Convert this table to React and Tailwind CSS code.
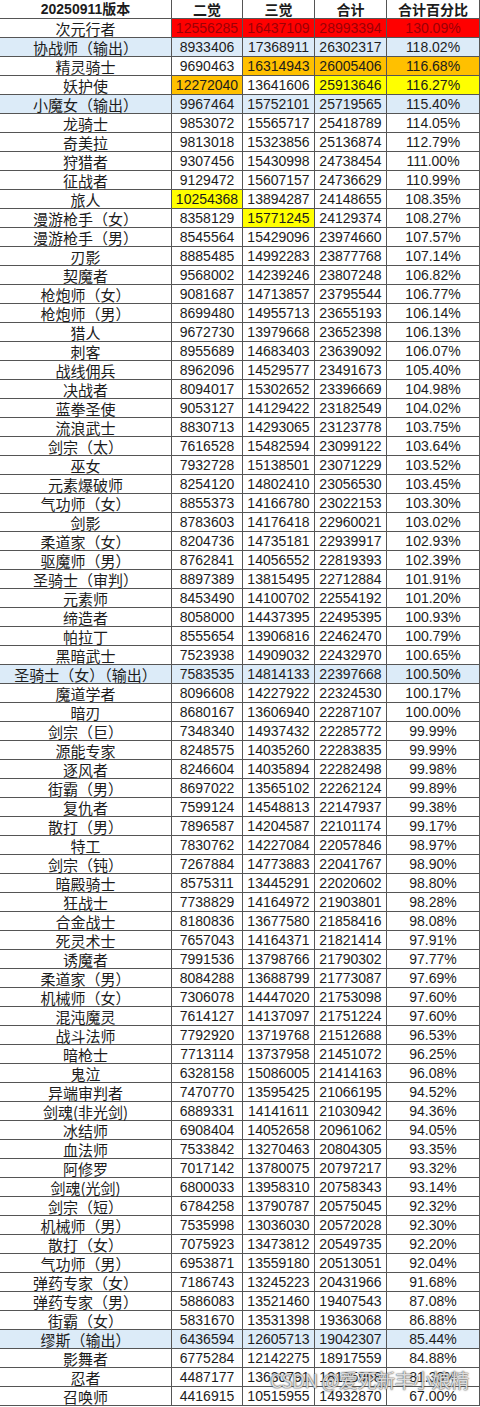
import React from "react";

// name, 二觉, 三觉, 合计, 百分比, fills for the 4 number cells, blue row flag
const rows = [
  ["次元行者", "12556285", "16437109", "28993394", "130.09%", ["r", "r", "r", "r"]],
  ["协战师（输出）", "8933406", "17368911", "26302317", "118.02%", null, true],
  ["精灵骑士", "9690463", "16314943", "26005406", "116.68%", ["", "o", "o", "o"]],
  ["妖护使", "12272040", "13641606", "25913646", "116.27%", ["o", "", "y", "y"]],
  ["小魔女（输出）", "9967464", "15752101", "25719565", "115.40%", null, true],
  ["龙骑士", "9853072", "15565717", "25418789", "114.05%"],
  ["奇美拉", "9813018", "15323856", "25136874", "112.79%"],
  ["狩猎者", "9307456", "15430998", "24738454", "111.00%"],
  ["征战者", "9129472", "15607157", "24736629", "110.99%"],
  ["旅人", "10254368", "13894287", "24148655", "108.35%", ["y", "", "", ""]],
  ["漫游枪手（女）", "8358129", "15771245", "24129374", "108.27%", ["", "y", "", ""]],
  ["漫游枪手（男）", "8545564", "15429096", "23974660", "107.57%"],
  ["刃影", "8885485", "14992283", "23877768", "107.14%"],
  ["契魔者", "9568002", "14239246", "23807248", "106.82%"],
  ["枪炮师（女）", "9081687", "14713857", "23795544", "106.77%"],
  ["枪炮师（男）", "8699480", "14955713", "23655193", "106.14%"],
  ["猎人", "9672730", "13979668", "23652398", "106.13%"],
  ["刺客", "8955689", "14683403", "23639092", "106.07%"],
  ["战线佣兵", "8962096", "14529577", "23491673", "105.40%"],
  ["决战者", "8094017", "15302652", "23396669", "104.98%"],
  ["蓝拳圣使", "9053127", "14129422", "23182549", "104.02%"],
  ["流浪武士", "8830713", "14293065", "23123778", "103.75%"],
  ["剑宗（太）", "7616528", "15482594", "23099122", "103.64%"],
  ["巫女", "7932728", "15138501", "23071229", "103.52%"],
  ["元素爆破师", "8254120", "14802410", "23056530", "103.45%"],
  ["气功师（女）", "8855373", "14166780", "23022153", "103.30%"],
  ["剑影", "8783603", "14176418", "22960021", "103.02%"],
  ["柔道家（女）", "8204736", "14735181", "22939917", "102.93%"],
  ["驱魔师（男）", "8762841", "14056552", "22819393", "102.39%"],
  ["圣骑士（审判）", "8897389", "13815495", "22712884", "101.91%"],
  ["元素师", "8453490", "14100702", "22554192", "101.20%"],
  ["缔造者", "8058000", "14437395", "22495395", "100.93%"],
  ["帕拉丁", "8555654", "13906816", "22462470", "100.79%"],
  ["黑暗武士", "7523938", "14909032", "22432970", "100.65%"],
  ["圣骑士（女）（输出）", "7583535", "14814133", "22397668", "100.50%", null, true],
  ["魔道学者", "8096608", "14227922", "22324530", "100.17%"],
  ["暗刃", "8680167", "13606940", "22287107", "100.00%"],
  ["剑宗（巨）", "7348340", "14937432", "22285772", "99.99%"],
  ["源能专家", "8248575", "14035260", "22283835", "99.99%"],
  ["逐风者", "8246604", "14035894", "22282498", "99.98%"],
  ["街霸（男）", "8697022", "13565102", "22262124", "99.89%"],
  ["复仇者", "7599124", "14548813", "22147937", "99.38%"],
  ["散打（男）", "7896587", "14204587", "22101174", "99.17%"],
  ["特工", "7830762", "14227084", "22057846", "98.97%"],
  ["剑宗（钝）", "7267884", "14773883", "22041767", "98.90%"],
  ["暗殿骑士", "8575311", "13445291", "22020602", "98.80%"],
  ["狂战士", "7738829", "14164972", "21903801", "98.28%"],
  ["合金战士", "8180836", "13677580", "21858416", "98.08%"],
  ["死灵术士", "7657043", "14164371", "21821414", "97.91%"],
  ["诱魔者", "7991536", "13798766", "21790302", "97.77%"],
  ["柔道家（男）", "8084288", "13688799", "21773087", "97.69%"],
  ["机械师（女）", "7306078", "14447020", "21753098", "97.60%"],
  ["混沌魔灵", "7614127", "14137097", "21751224", "97.60%"],
  ["战斗法师", "7792920", "13719768", "21512688", "96.53%"],
  ["暗枪士", "7713114", "13737958", "21451072", "96.25%"],
  ["鬼泣", "6328158", "15086005", "21414163", "96.08%"],
  ["异端审判者", "7470770", "13595425", "21066195", "94.52%"],
  ["剑魂(非光剑)", "6889331", "14141611", "21030942", "94.36%"],
  ["冰结师", "6908404", "14052658", "20961062", "94.05%"],
  ["血法师", "7533842", "13270463", "20804305", "93.35%"],
  ["阿修罗", "7017142", "13780075", "20797217", "93.32%"],
  ["剑魂(光剑)", "6800033", "13958310", "20758343", "93.14%"],
  ["剑宗（短）", "6784258", "13790787", "20575045", "92.32%"],
  ["机械师（男）", "7535998", "13036030", "20572028", "92.30%"],
  ["散打（女）", "7075923", "13473812", "20549735", "92.20%"],
  ["气功师（男）", "6953871", "13559180", "20513051", "92.04%"],
  ["弹药专家（女）", "7186743", "13245223", "20431966", "91.68%"],
  ["弹药专家（男）", "5886083", "13521460", "19407543", "87.08%"],
  ["街霸（女）", "5831670", "13531398", "19363068", "86.88%"],
  ["缪斯（输出）", "6436594", "12605713", "19042307", "85.44%", null, true],
  ["影舞者", "6775284", "12142275", "18917559", "84.88%"],
  ["忍者", "4487177", "13630791", "18125968", "81.33%"],
  ["召唤师", "4416915", "10515955", "14932870", "67.00%"],
];

const fills = {
  r: "bg-[#ff0000] text-[#9c0006]",
  o: "bg-[#ffc000]",
  y: "bg-[#ffff00]",
};

const cell =
  "h-[19px] leading-[17px] flex items-center justify-center border-r border-b border-[#555] whitespace-nowrap";
const cjk = "font-['Noto_Sans_CJK_SC','Noto_Sans',sans-serif]";
const num = "font-['Liberation_Sans','Noto_Sans_CJK_SC',sans-serif] text-[14px]";

const App = () => {
  return (
    <div className="relative w-[480px] bg-white text-[#1c1c1c]">
      <div className="grid grid-cols-[172px_71px_72px_72px_93px]">
        {/* header */}
        <div className={cell + " " + num + " font-bold"}>20250911版本</div>
        <div className={cell + " " + cjk + " text-[14px] font-bold"}>二觉</div>
        <div className={cell + " " + cjk + " text-[14px] font-bold"}>三觉</div>
        <div className={cell + " " + cjk + " text-[14px] font-bold"}>合计</div>
        <div className={cell + " " + cjk + " text-[14px] font-bold"}>合计百分比</div>

        {rows.map((row, i) => {
          const [name, a, b, c, pct, f, blue] = row;
          const bg = blue ? "bg-[#dcebf8]" : "";
          const vals = [a, b, c, pct];
          return (
            <React.Fragment key={i}>
              <div className={cell + " " + cjk + " text-[15px] " + bg}>{name}</div>
              {vals.map((v, j) => (
                <div key={j} className={cell + " " + num + " " + (f && f[j] ? fills[f[j]] : bg)}>
                  {v}
                </div>
              ))}
            </React.Fragment>
          );
        })}
      </div>

      {/* watermark */}
      <div className="absolute left-[270px] top-[1368px] font-['Noto_Sans_CJK_SC',sans-serif] text-[19px] leading-[24px] text-white/80 tracking-tight [text-shadow:0_0_2px_#555,0_0_1px_#333]">
        CSDN @爱死新丰小娘精
      </div>
    </div>
  );
};

export default App;
